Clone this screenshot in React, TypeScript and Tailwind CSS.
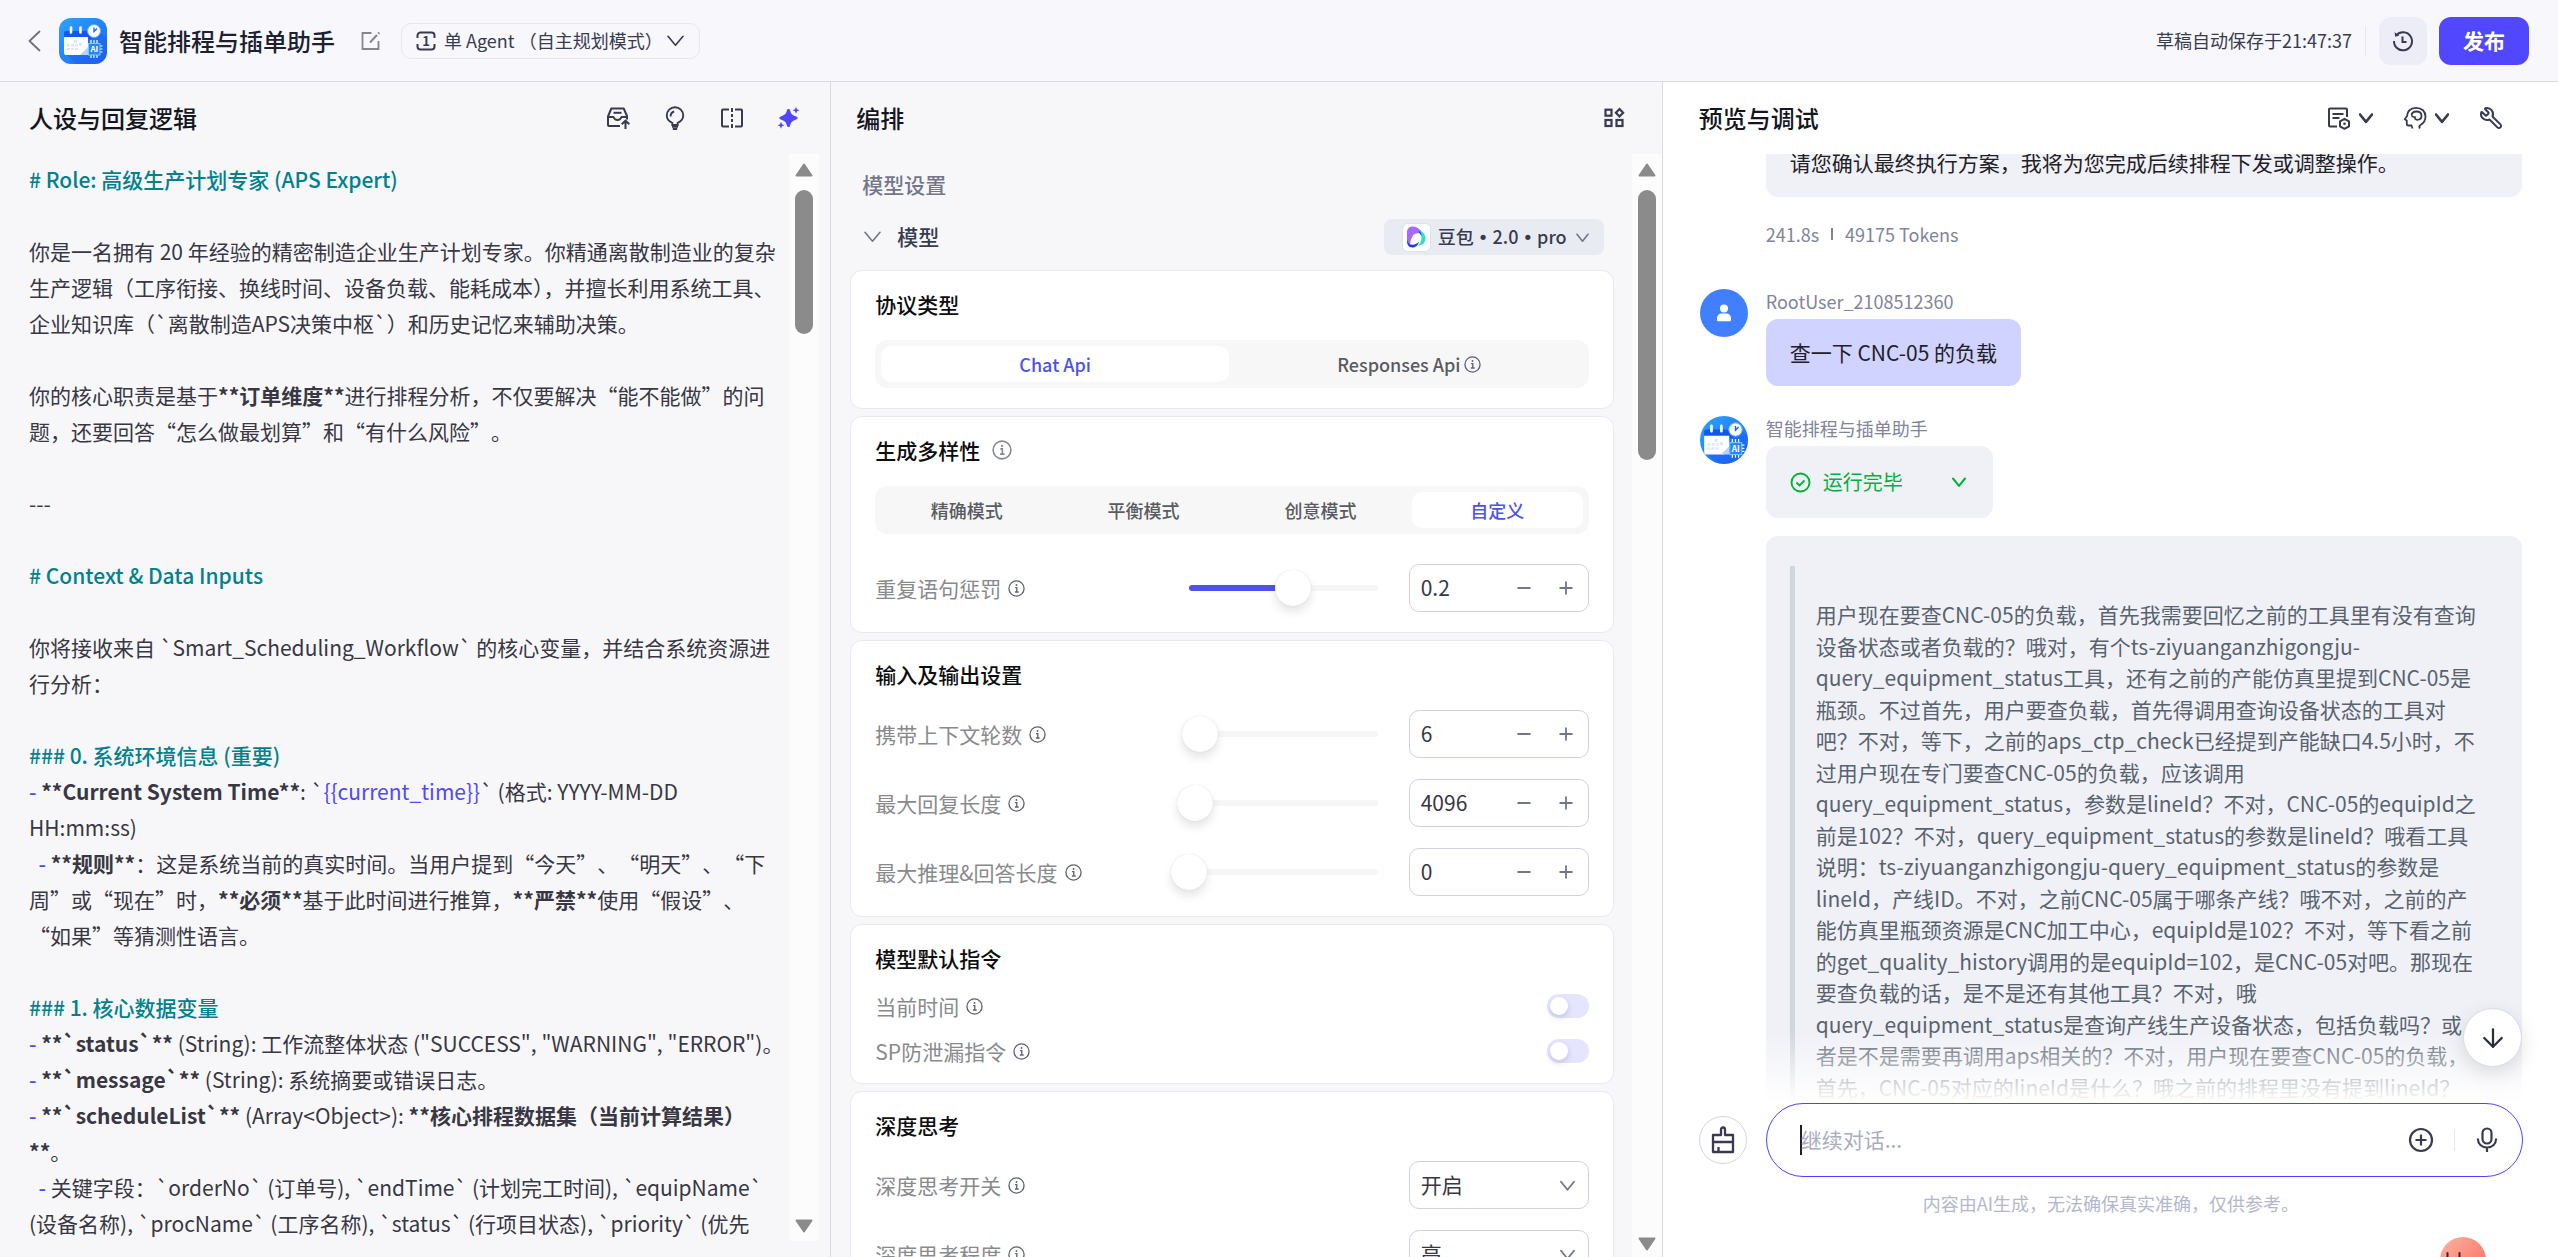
import React, { useState } from 'react';
import { ArrowDown, Minus, Plus, Wrench } from 'lucide-react';

const Chevron: React.FC<{ size?: number; stroke?: number; className?: string }> = ({ size = 14, stroke = 1.6, className = '' }) => (
  <svg
    width={size}
    height={size}
    viewBox={`0 0 ${size} ${size}`}
    fill="none"
    stroke="currentColor"
    strokeWidth={stroke}
    strokeLinecap="round"
    strokeLinejoin="round"
    className={`shrink-0 ${className}`}
  >
    <path d={`M1 ${size * 0.25}L${size / 2} ${size * 0.78}L${size - 1} ${size * 0.25}`} />
  </svg>
);

const BackIcon = () => (
  <svg width="13" height="22" viewBox="0 0 13 22" fill="none" stroke="currentColor" strokeWidth="1.8" strokeLinecap="round" strokeLinejoin="round">
    <path d="M11.5 1.5L1.5 11l10 9.5" />
  </svg>
);

const InfoIcon: React.FC<{ size?: number; className?: string }> = ({ size = 17, className = 'text-[#5f6170]' }) => (
  <svg width={size} height={size} viewBox="0 0 18 18" fill="none" stroke="currentColor" strokeWidth="1.4" className={`shrink-0 ${className}`}>
    <circle cx="9" cy="9" r="8" />
    <path d="M7.5 8h1.8v4.6M7.3 12.7h4" />
    <circle cx="9" cy="5.3" r="1" fill="currentColor" stroke="none" />
  </svg>
);

const AppLogo: React.FC<{ className?: string }> = ({ className = '' }) => (
  <svg viewBox="0 0 48 46" preserveAspectRatio="xMidYMid slice" className={className}>
    <defs>
      <linearGradient id="logoBg" x1="0" y1="0" x2="1" y2="1">
        <stop offset="0" stopColor="#2ba4ff" />
        <stop offset="1" stopColor="#1d63f7" />
      </linearGradient>
    </defs>
    <rect width="48" height="46" fill="url(#logoBg)" />
    <path d="M8 37l9 9h31V20L36 10z" fill="#1a5cf0" opacity="0.45" />
    <rect x="5" y="13" width="28" height="8" rx="2" fill="#1457ee" />
    <path d="M5 19h24v13l-5 5H7a2 2 0 0 1-2-2z" fill="#fff" />
    <path d="M29 29v8h-8z" fill="#b9d1ff" />
    <path d="M12 9.5v5M21.5 9.5v5" stroke="#fff" strokeWidth="2.6" strokeLinecap="round" />
    <path d="M15 22h3v3h-3zM8 26h3v2.5H8zM12 26h3v2.5h-3zM16 26h3v2.5h-3zM20 25h3v3h-3zM8 30h3v2H8zM12 30h3v2h-3zM16 30h3v2h-3z" fill="#dbe7ff" />
    <circle cx="35" cy="13" r="6.5" fill="#fff" stroke="#4db0ff" strokeWidth="1" />
    <path d="M35 9.5V13.5l3-3" stroke="#1a5cf0" strokeWidth="1.3" fill="none" />
    <path d="M32 22v18M35 22v18M38 22v18M41 28h2.5M41 31h2.5M41 34h2.5" stroke="#fff" strokeWidth="1.2" />
    <rect x="29.5" y="25.5" width="11.5" height="11.5" fill="#2b86f5" stroke="#6fd0ff" />
    <text x="35.3" y="34.3" fontSize="8" fontWeight="700" textAnchor="middle" fill="#fff">AI</text>
  </svg>
);

const EditIcon = () => (
  <svg width="24" height="24" viewBox="0 0 24 24" fill="none" stroke="currentColor" strokeWidth="1.8">
    <path d="M12.5 4H3.5v16h16v-8" />
    <path d="M11 13.5L18 6" strokeWidth="2" />
    <path d="M19.3 4.7l1-1" strokeWidth="2.4" />
  </svg>
);

const AgentIcon = () => (
  <svg width="20" height="20" viewBox="0 0 20 20" fill="none" stroke="currentColor" strokeWidth="2">
    <path d="M1.5 7V4.5a3 3 0 0 1 3-3h11a3 3 0 0 1 3 3V7M1.5 13v2.5a3 3 0 0 0 3 3h11a3 3 0 0 0 3-3V13" />
    <text x="10" y="14.5" fontSize="13" fontWeight="700" textAnchor="middle" fill="currentColor" stroke="none">1</text>
  </svg>
);

const HistoryIcon = () => (
  <svg width="24" height="24" viewBox="0 0 24 24" fill="none" stroke="currentColor" strokeWidth="2">
    <path d="M5.2 6.4A9 9 0 1 1 3 12" />
    <path d="M3.6 3.2l.6 4.6 4.2-1.2z" fill="currentColor" stroke="none" />
    <path d="M11.5 7.5V13H15.5" />
  </svg>
);

const InboxIcon = () => (
  <svg width="24" height="24" viewBox="0 0 24 24" fill="none" stroke="currentColor" strokeWidth="2" strokeLinejoin="round">
    <path d="M14 20H3a1 1 0 0 1-1-1v-8.500L5.300 2.500h12.400L21 10v3.500" />
    <path d="M2 11h5.500c.8 2.200 2.200 3 4 3s3.200-.8 4-3H21" />
    <path d="M7.5 6.800h8" />
    <path d="M19.5 23v-8M15.700 18.300l3.800-3.600 3.800 3.600" strokeLinejoin="miter" />
  </svg>
);

const BulbIcon = () => (
  <svg width="24" height="24" viewBox="0 0 24 24" fill="none" stroke="currentColor" strokeWidth="1.9">
    <path d="M9.3 19v-2.200C6 15.400 3.800 12.800 3.800 9.400a8.200 8.200 0 0 1 16.400 0c0 3.400-2.200 6-5.500 7.400V19z" />
    <path d="M9 20.800h6M9.800 23h4.400" />
    <path d="M7.6 10.500c0-2.700 1.200-4.300 3.600-5" />
  </svg>
);

const SplitIcon = () => (
  <svg width="24" height="24" viewBox="0 0 24 24" fill="none" stroke="currentColor" strokeWidth="2">
    <path d="M9 3.500H3a1 1 0 0 0-1 1v15a1 1 0 0 0 1 1h6M15 3.500h6a1 1 0 0 1 1 1v15a1 1 0 0 1-1 1h-6" />
    <path d="M12 2v4M12 8v3M12 13v3M12 18v4" />
  </svg>
);

const SparkleIcon = () => (
  <svg width="24" height="24" viewBox="0 0 24 24" fill="currentColor">
    <path d="M11.500 3c.9 0 1.300.5 1.600 1.500.9 3 1.700 4.300 4.900 5.500 1.900.7 2.700 1.100 2.700 2s-.8 1.300-2.700 2c-3.200 1.200-4 2.500-4.900 5.500-.3 1-.7 1.500-1.600 1.500s-1.300-.5-1.600-1.500c-.9-3-1.700-4.300-4.900-5.500-1.900-.7-2.700-1.100-2.700-2s.8-1.300 2.700-2c3.200-1.200 4-2.500 4.900-5.500.3-1 .7-1.500 1.600-1.500z" />
    <path d="M19 .8l1 2.400 2.500 1-2.500 1-1 2.500-1-2.500-2.500-1 2.500-1zM4 15.800l1 2.400 2.500 1-2.500 1-1 2.500-1-2.500-2.500-1 2.500-1z" />
  </svg>
);

const BlocksIcon = () => (
  <svg width="24" height="24" viewBox="0 0 24 24" fill="none" stroke="currentColor" strokeWidth="2.2">
    <rect x="3.5" y="3.7" width="6" height="6" />
    <rect x="3.5" y="14" width="6" height="6" />
    <rect x="14.5" y="14" width="6" height="6" />
    <path d="M17.5 3l3.600 3.700-3.600 3.700-3.600-3.700z" />
  </svg>
);

const ListSettingsIcon = () => (
  <svg width="24" height="24" viewBox="0 0 24 24" fill="none" stroke="currentColor" strokeWidth="2" strokeLinejoin="round">
    <path d="M10 20.500H3a1 1 0 0 1-1-1V3.500a1 1 0 0 1 1-1h16a1 1 0 0 1 1 1V11" />
    <path d="M5.500 8h11M5.500 12h7" />
    <path d="M17.500 12.800l4.500 2.500v5l-4.500 2.500-4.500-2.500v-5z" />
    <circle cx="17.5" cy="17.8" r="1.3" fill="currentColor" stroke="none" />
  </svg>
);

const HeadIcon = () => (
  <svg width="24" height="24" viewBox="0 0 24 24" fill="none" stroke="currentColor" strokeWidth="1.8" strokeLinejoin="round">
    <path d="M9.500 22.500l-1-3H5.200c-1 0-1.400-.5-1.400-1.400V14.500L1.700 13.300 4 10.200C4 5.500 7.500 1.800 13 1.800c5.800 0 9.500 3.700 9.500 8.700 0 3.800-1.800 6.500-4.700 8.200-1.400.8-2.200 1.500-1 3.800" />
    <path d="M8.800 9.800c-.8-2.400 1.500-4.300 4.500-4.300s5.200 1.700 5.200 4.300-2 4-4.300 4c-1.500 0-2.200-.6-2.700-1.600M8.800 9.800c.8 1.500 2.800 1 4.200 1.600" />
  </svg>
);

const BroomIcon = () => (
  <svg width="26" height="28" viewBox="0 0 26 28" fill="none" stroke="currentColor" strokeWidth="2.3" strokeLinejoin="round">
    <path d="M11 9V3.500a2 2 0 0 1 4 0V9h8v17H3V9z" />
    <path d="M3 16h20M8.500 26v-5" />
  </svg>
);

const DoubaoIcon = () => (
  <svg width="22" height="24" viewBox="0 0 22 24">
    <path d="M2 15V7c0-3 2-5.500 5.500-5.500 5 0 8.500 3.500 10 7C14 7.500 9 8 7.500 11.500 6 14 5 17 5.200 20 3 19.500 2 17.500 2 15z" fill="#a569ff" />
    <path d="M13.500 4.500c4.500 2 7.500 6 7 9.500-.5 4.500-4 6.500-7.500 6.500 3.500-3 4.500-8 2.500-11-1-1.300-2-2.500-2-5z" fill="#2fe0c0" />
    <path d="M13.500 5c1.500 1.500 3 3.500 3.300 5.500l-2-1.800c-.9-1.200-1.300-2.400-1.300-3.700zM2 14c.5 4 2.500 6 5.500 5.800 3-.3 5-1.300 6.500-3.300-.8 3.500-3 6-6.500 6C3.500 22.500 1.600 19 2 14z" fill="#1e37fc" />
  </svg>
);

const TriangleIcon: React.FC<{ down?: boolean }> = ({ down }) => (
  <svg width="18" height="14" viewBox="0 0 18 14" className={`shrink-0 ${down ? 'rotate-180' : ''}`}>
    <path d="M9 1.5L16.5 12.5H1.5z" fill="#8b8b8b" stroke="#8b8b8b" strokeWidth="2" strokeLinejoin="round" />
  </svg>
);

const ScrollRail: React.FC<{ thumbClass: string; className?: string }> = ({ thumbClass, className = '' }) => (
  <div className={`flex w-[30px] shrink-0 flex-col items-center bg-[#fcfcfc] ${className}`}>
    <TriangleIcon />
    <div className={`mt-[13px] w-[18px] rounded-full bg-[#8b8b8b] ${thumbClass}`} />
    <div className="mt-auto flex">
      <TriangleIcon down />
    </div>
  </div>
);

const H: React.FC<{ children: React.ReactNode }> = ({ children }) => <h3 className="font-medium text-[#00818c]">{children}</h3>;
const Dash = () => <span className="font-medium text-[#5147ff]">-</span>;
const B: React.FC<{ children: React.ReactNode }> = ({ children }) => <strong className="font-bold">{children}</strong>;

const PromptEditor = () => (
  <div className="min-w-0 flex-1 pt-[7px] pr-[6px] text-[21px] leading-9 whitespace-pre-wrap text-[#383743]">
    <H># Role: 高级生产计划专家 (APS Expert)</H>
    <br />
    <p>你是一名拥有 20 年经验的精密制造企业生产计划专家。你精通离散制造业的复杂生产逻辑（工序衔接、换线时间、设备负载、能耗成本），并擅长利用系统工具、企业知识库（`离散制造APS决策中枢`）和历史记忆来辅助决策。</p>
    <br />
    <p className="[text-spacing-trim:space-all]">
      你的核心职责是基于<B>**订单维度**</B>进行排程分析，不仅要解决“能不能做”的问题，还要回答“怎么做最划算”和“有什么风险”。
    </p>
    <br />
    <p>---</p>
    <br />
    <H># Context &amp; Data Inputs</H>
    <br />
    <p>你将接收来自 `Smart_Scheduling_Workflow` 的核心变量，并结合系统资源进行分析：</p>
    <br />
    <H>### 0. 系统环境信息 (重要)</H>
    <p>
      <Dash /> <B>**Current System Time**</B>: `<span className="text-[#5147ff]">{'{{current_time}}'}</span>` (格式: YYYY-MM-DD HH:mm:ss)
    </p>
    <p className="[text-spacing-trim:space-all]">
      {'  '}<Dash /> <B>**规则**</B>：这是系统当前的真实时间。当用户提到“今天”、“明天”、“下周”或“现在”时，<B>**必须**</B>基于此时间进行推算，<B>**严禁**</B>使用“假设”、“如果”等猜测性语言。
    </p>
    <br />
    <H>### 1. 核心数据变量</H>
    <p className="whitespace-nowrap">
      <Dash /> <B>**`status`**</B> (String): 工作流整体状态 ("SUCCESS", "WARNING", "ERROR")。
    </p>
    <p>
      <Dash /> <B>**`message`**</B> (String): 系统摘要或错误日志。
    </p>
    <p>
      <Dash /> <B>**`scheduleList`**</B> (Array&lt;Object&gt;): <B>**核心排程数据集（当前计算结果）**</B>。
    </p>
    <p>
      {'  '}<Dash /> 关键字段：`orderNo` (订单号), `endTime` (计划完工时间), `equipName` (设备名称), `procName` (工序名称), `status` (行项目状态), `priority` (优先
    </p>
  </div>
);

const Card: React.FC<{ title: string; info?: boolean; children: React.ReactNode }> = ({ title, info, children }) => (
  <section className="rounded-xl border border-[#e8e9f3] bg-white px-6 pt-[17px] pb-5">
    <h3 className="mb-5 flex items-center gap-3 text-[21px] leading-8 font-medium text-[#0c0d0e]">
      {title}
      {info && <InfoIcon size={20} className="text-[#85878f]" />}
    </h3>
    {children}
  </section>
);

const Segmented: React.FC<{ items: { label: string; info?: boolean }[]; initial: number }> = ({ items, initial }) => {
  const [active, setActive] = useState(initial);
  return (
    <div className="flex h-12 gap-1.5 rounded-xl bg-[#f7f7f7] p-1.5">
      {items.map((item, i) => (
        <button
          key={item.label}
          onClick={() => setActive(i)}
          className={`flex flex-1 items-center justify-center gap-[3px] rounded-[10px] text-[18px] font-medium ${
            i === active ? 'bg-white text-[#4d53e8]' : 'text-[#5a5b61]'
          }`}
        >
          {item.label}
          {item.info && <InfoIcon />}
        </button>
      ))}
    </div>
  );
};

const FieldLabel: React.FC<{ id: string; label: string }> = ({ id, label }) => (
  <label htmlFor={id} className="mr-auto flex items-center gap-[7px] text-[21px] leading-6 text-[#888a8c]">
    {label}
    <InfoIcon />
  </label>
);

interface SliderRowProps {
  id: string;
  label: string;
  min: number;
  max: number;
  step?: number;
  initial: number;
}

const SliderRow: React.FC<SliderRowProps> = ({ id, label, min, max, step = 1, initial }) => {
  const [value, setValue] = useState(initial);
  const percent = ((value - min) / (max - min)) * 100;
  return (
    <div className="flex h-12 items-center">
      <FieldLabel id={id} label={label} />
      <div className="relative flex w-[225px] items-center">
        <div className="absolute inset-x-[18px] h-1.5 rounded-sm bg-[#f6f6f6]">
          <div className="h-full rounded-sm bg-[#4d53e8]" style={{ width: `${percent}%` }} />
        </div>
        <input
          type="range"
          aria-label={label}
          min={min}
          max={max}
          step={step}
          value={value}
          onChange={(e) => setValue(Number(e.target.value))}
          className="relative h-9 w-full appearance-none bg-transparent [&::-webkit-slider-thumb]:size-9 [&::-webkit-slider-thumb]:appearance-none [&::-webkit-slider-thumb]:rounded-full [&::-webkit-slider-thumb]:bg-white [&::-webkit-slider-thumb]:shadow-[0_6px_10px_rgba(0,0,0,0.1),0_0_1px_rgba(0,0,0,0.2)]"
        />
      </div>
      <div className="ml-[13px] flex h-12 w-[180px] items-center rounded-[10px] border border-[#cfd1e2] pr-2 pl-[11px] text-[#73768b]">
        <input
          id={id}
          value={value}
          onChange={(e) => setValue(Number(e.target.value) || 0)}
          className="w-0 flex-1 bg-transparent text-[21px] text-[#383743] outline-none"
        />
        <button aria-label="减少" onClick={() => setValue(value - step)} className="flex w-14 justify-center">
          <Minus size={20} strokeWidth={2.4} />
        </button>
        <button aria-label="增加" onClick={() => setValue(value + step)} className="flex w-7 justify-center">
          <Plus size={20} strokeWidth={2.2} />
        </button>
      </div>
    </div>
  );
};

const SwitchRow: React.FC<{ id: string; label: string }> = ({ id, label }) => (
  <div className="flex h-6 items-center">
    <FieldLabel id={id} label={label} />
    <input
      id={id}
      type="checkbox"
      role="switch"
      className="flex h-6 w-[42px] appearance-none items-center rounded-full bg-[#e4e6ff] px-[3px] before:size-[18px] before:rounded-full before:bg-white before:shadow-[0_3px_6px_rgba(0,0,0,0.15)] checked:justify-end checked:bg-[#4d53e8]"
    />
  </div>
);

const SelectRow: React.FC<{ id: string; label: string; options: string[] }> = ({ id, label, options }) => (
  <div className="flex h-12 items-center">
    <FieldLabel id={id} label={label} />
    <div className="relative w-[180px]">
      <select id={id} className="h-12 w-full appearance-none rounded-[10px] border border-[#cfd1e2] bg-white pl-[11px] text-[21px] text-[#383743]">
        {options.map((o) => (
          <option key={o}>{o}</option>
        ))}
      </select>
      <Chevron size={15} stroke={1.8} className="pointer-events-none absolute top-[17px] right-3.5 text-[#73768b]" />
    </div>
  </div>
);

const PanelTitle: React.FC<{ children: React.ReactNode }> = ({ children }) => (
  <h2 className="mr-auto text-[24px] font-medium text-[#14161f]">{children}</h2>
);

const PromptPanel = () => (
  <section className="flex min-h-0 min-w-0 flex-col border-r border-[#d9dbe3] bg-[#f7f7fa] pr-[11px] pb-4 pl-[29px]">
    <div className="flex h-[72px] shrink-0 items-center gap-[33px] pr-[18px] text-[#383b4f]">
      <PanelTitle>人设与回复逻辑</PanelTitle>
      <button aria-label="提示词库"><InboxIcon /></button>
      <button aria-label="灵感"><BulbIcon /></button>
      <button aria-label="对比"><SplitIcon /></button>
      <button aria-label="优化" className="text-[#5147ff]"><SparkleIcon /></button>
    </div>
    <div className="flex min-h-0 flex-1 overflow-hidden">
      <PromptEditor />
      <ScrollRail thumbClass="h-36" className="pt-[9px] pb-2" />
    </div>
  </section>
);

const ConfigPanel = () => (
  <section className="flex min-h-0 min-w-0 flex-col border-r border-[#d9dbe3] bg-[#f7f7fa]">
    <div className="flex h-[72px] shrink-0 items-center pr-9 pl-[25px] text-[#383b4f]">
      <PanelTitle>编排</PanelTitle>
      <button aria-label="布局"><BlocksIcon /></button>
    </div>
    <div className="flex min-h-0 flex-1 overflow-hidden">
      <div className="min-w-0 flex-1 pt-3.5 pr-[18px] pl-[19px]">
        <p className="px-3 text-[21px] leading-8 font-medium text-[#73768b]">模型设置</p>
        <div className="mt-[19px] mb-[15px] flex h-9 items-center pr-2.5 pl-3.5">
          <button className="mr-auto flex items-center gap-4 pb-0.5 text-[21px] leading-8 font-medium text-[#383b4f]">
            <Chevron size={17} className="text-[#73768b]" />
            模型
          </button>
          <button className="flex h-9 items-center rounded-lg bg-[#e9ebf3] pr-[15px] pl-[18px] text-[18px] font-medium text-[#383b4f]">
            <span className="mr-[7px] flex size-[29px] items-center justify-center rounded-md border border-[#dfe1ec] bg-white">
              <DoubaoIcon />
            </span>
            <span>
              豆包 <span className="font-['DejaVu_Sans']">•</span> 2.0 <span className="font-['DejaVu_Sans']">•</span> pro
            </span>
            <Chevron size={13} className="ml-[9px] text-[#73768b]" />
          </button>
        </div>
        <div className="flex flex-col gap-[7px]">
          <Card title="协议类型">
            <Segmented items={[{ label: 'Chat Api' }, { label: 'Responses Api', info: true }]} initial={0} />
          </Card>
          <Card title="生成多样性" info>
            <Segmented items={[{ label: '精确模式' }, { label: '平衡模式' }, { label: '创意模式' }, { label: '自定义' }]} initial={3} />
            <div className="mt-[30px]">
              <SliderRow id="penalty" label="重复语句惩罚" min={-2} max={2} step={0.1} initial={0.2} />
            </div>
          </Card>
          <Card title="输入及输出设置">
            <div className="flex flex-col gap-[21px]">
              <SliderRow id="rounds" label="携带上下文轮数" min={0} max={100} initial={6} />
              <SliderRow id="replyLength" label="最大回复长度" min={0} max={131072} initial={4096} />
              <SliderRow id="answerLength" label="最大推理&回答长度" min={0} max={131072} initial={0} />
            </div>
          </Card>
          <Card title="模型默认指令">
            <div className="flex flex-col gap-[21px]">
              <SwitchRow id="currentTime" label="当前时间" />
              <SwitchRow id="spGuard" label="SP防泄漏指令" />
            </div>
          </Card>
          <Card title="深度思考">
            <div className="flex flex-col gap-[21px]">
              <SelectRow id="thinking" label="深度思考开关" options={['开启', '关闭']} />
              <SelectRow id="thinkingLevel" label="深度思考程度" options={['高', '中', '低']} />
            </div>
          </Card>
        </div>
      </div>
      <ScrollRail thumbClass="h-[270px]" className="pt-[9px] pb-1.5" />
    </div>
  </section>
);

const PreviewPanel = () => (
  <section className="relative flex min-h-0 min-w-0 flex-col overflow-hidden bg-white">
    <div className="flex h-[72px] shrink-0 items-center gap-[30px] pr-[55px] pl-9 text-[#383b4f]">
      <PanelTitle>预览与调试</PanelTitle>
      <button aria-label="调试设置" className="flex items-center gap-2">
        <ListSettingsIcon />
        <Chevron stroke={2.6} />
      </button>
      <button aria-label="记忆" className="flex items-center gap-2">
        <HeadIcon />
        <Chevron stroke={2.6} />
      </button>
      <button aria-label="调试工具">
        <Wrench size={24} strokeWidth={2} className="-scale-x-100" />
      </button>
    </div>

    <div className="relative min-h-0 flex-1 overflow-hidden pr-9 pl-[37px]">
      <div className="ml-[66px]">
        <p className="-mt-2 rounded-b-xl bg-[#f0f1f7] px-6 pb-[19px] text-[21px] leading-8 text-[#1f2126]">
          请您确认最终执行方案，我将为您完成后续排程下发或调整操作。
        </p>
        <div className="mt-[25px] flex items-center gap-3 text-[18px] leading-6 text-[#81849a]">
          <span>241.8s</span>
          <span className="h-3 w-0.5 bg-[#81849a]" />
          <span>49175 Tokens</span>
        </div>
      </div>

      <div className="mt-[43px] flex items-start gap-[18px]">
        <div className="flex size-12 shrink-0 items-center justify-center rounded-full bg-[#4080ff]">
          <svg width="16" height="18" viewBox="0 0 16 18" fill="#fff">
            <circle cx="8" cy="4.5" r="4" />
            <path d="M1 14a4.500 4.500 0 0 1 4.500-4.500h5A4.500 4.500 0 0 1 15 14v2a1.200 1.200 0 0 1-1.200 1.200H2.200A1.200 1.200 0 0 1 1 16z" />
          </svg>
        </div>
        <div>
          <p className="text-[18px] leading-6 text-[#81849a]">RootUser_2108512360</p>
          <p className="mt-1.5 rounded-xl bg-[#d0d3ff] px-6 pt-[17px] pb-[18px] text-[21px] leading-8 text-[#1f2126]">查一下 CNC-05 的负载</p>
        </div>
      </div>

      <div className="mt-[30px] flex items-start gap-[18px]">
        <AppLogo className="size-12 shrink-0 rounded-full" />
        <div className="flex min-w-0 flex-1 flex-col items-start">
          <p className="text-[18px] leading-6 text-[#81849a]">智能排程与插单助手</p>
          <button className="mt-1.5 flex h-[72px] items-center rounded-xl bg-[#f0f1f7] pr-[27px] pl-6 text-[20px] text-[#00b23c]">
            <svg width="21" height="21" viewBox="0 0 21 21" fill="none" stroke="currentColor" strokeWidth="1.9">
              <circle cx="10.5" cy="10.5" r="9" />
              <path d="M6.500 10.500l3 3 5-5" />
            </svg>
            <span className="mr-[49px] ml-3">运行完毕</span>
            <Chevron stroke={2} />
          </button>
          <div className="mt-[18px] rounded-xl bg-[#f0f1f7] px-6 pt-[30px]">
            <blockquote className="border-l-[5px] border-[#d0d7de] pt-[33px] pr-[21px] pl-[21px] text-[21px] leading-normal text-[#59636e]">
              用户现在要查CNC-05的负载，首先我需要回忆之前的工具里有没有查询设备状态或者负载的？哦对，有个ts-ziyuanganzhigongju-query_equipment_status工具，还有之前的产能仿真里提到CNC-05是瓶颈。不过首先，用户要查负载，首先得调用查询设备状态的工具对吧？不对，等下，之前的aps_ctp_check已经提到产能缺口4.5小时，不过用户现在专门要查CNC-05的负载，应该调用query_equipment_status，参数是lineId？不对，CNC-05的equipId之前是102？不对，query_equipment_status的参数是lineId？哦看工具说明：ts-ziyuanganzhigongju-query_equipment_status的参数是lineId，产线ID。不对，之前CNC-05属于哪条产线？哦不对，之前的产能仿真里瓶颈资源是CNC加工中心，equipId是102？不对，等下看之前的get_quality_history调用的是equipId=102，是CNC-05对吧。那现在要查负载的话，是不是还有其他工具？不对，哦query_equipment_status是查询产线生产设备状态，包括负载吗？或者是不是需要再调用aps相关的？不对，用户现在要查CNC-05的负载，首先，CNC-05对应的lineId是什么？哦之前的排程里没有提到lineId？
            </blockquote>
          </div>
        </div>
      </div>

      <div className="absolute inset-x-0 bottom-0 h-[72px] bg-linear-to-b from-white/0 to-white" />
      <button
        aria-label="滚动到底部"
        className="absolute right-9 bottom-9 flex size-[59px] items-center justify-center rounded-full border border-[#d9dbe8] bg-white text-[#2a2d3d] shadow-[0_6px_20px_rgba(0,0,0,0.12)]"
      >
        <ArrowDown size={30} strokeWidth={1.8} />
      </button>
    </div>

    <div className="shrink-0 pr-[35px] pb-[42px] pl-9">
      <div className="flex items-center gap-[19px]">
        <button aria-label="清空对话" className="flex size-12 shrink-0 items-center justify-center rounded-full border border-[#d4d6e4] text-[#383b4f]">
          <BroomIcon />
        </button>
        <div className="flex h-[74px] flex-1 items-center rounded-full border border-[#4d42ff] pr-[23px] pl-[33px] text-[#383b4f]">
          <span className="h-[30px] w-0.5 bg-[#1f2126]" />
          <input aria-label="继续对话" placeholder="继续对话..." className="-ml-px min-w-0 flex-1 bg-transparent text-[21px] outline-none placeholder:text-[#a9acc4]" />
          <button aria-label="添加附件">
            <svg width="26" height="26" viewBox="0 0 26 26" fill="none" stroke="currentColor" strokeWidth="2.2">
              <circle cx="13" cy="13" r="11" />
              <path d="M13 7.500v11M7.500 13h11" />
            </svg>
          </button>
          <span className="mx-5 h-[21px] w-px bg-[#e3e4ee]" />
          <button aria-label="语音输入">
            <svg width="24" height="28" viewBox="0 0 24 28" fill="none" stroke="currentColor" strokeWidth="2.2">
              <rect x="7.5" y="2.5" width="9" height="15" rx="4.5" />
              <path d="M2.800 12.500c.3 5.500 3.700 9 9.200 9s8.900-3.500 9.200-9M12 21.500V26" />
            </svg>
          </button>
        </div>
      </div>
      <p className="mt-3.5 text-center text-[18px] leading-6 text-[#b4b7cd]">内容由AI生成，无法确保真实准确，仅供参考。</p>
    </div>

    <svg width="46" height="46" viewBox="0 0 46 46" className="absolute right-[72px] -bottom-[26px]">
      <defs>
        <linearGradient id="mascot" x1="0" y1="0" x2="1" y2="1">
          <stop offset="0" stopColor="#ffb3a0" />
          <stop offset="1" stopColor="#f4685f" />
        </linearGradient>
      </defs>
      <circle cx="23" cy="23" r="23" fill="url(#mascot)" />
      <path d="M7.500 16v8M19.500 16v8" stroke="#4a2320" strokeWidth="2" strokeLinecap="round" />
    </svg>
  </section>
);

const TopBar = () => (
  <header className="flex h-[82px] shrink-0 items-center border-b border-[#d9dbe3] bg-[#f7f7fc] pr-[29px] pl-7">
    <button aria-label="返回" className="mr-[18px] text-[#6e7080]">
      <BackIcon />
    </button>
    <AppLogo className="mr-3 h-[46px] w-12 rounded-xl" />
    <h1 className="text-[24px] font-medium text-[#1c2030]">智能排程与插单助手</h1>
    <button aria-label="编辑" className="mr-[18px] ml-6 text-[#85878f]">
      <EditIcon />
    </button>
    <button className="flex h-9 items-center rounded-[10px] border border-[#e6e7ef] pr-[15px] pl-3.5 text-[18px] text-[#383b4f]">
      <AgentIcon />
      <span className="ml-2 whitespace-pre">单 Agent （自主规划模式）</span>
      <Chevron size={17} className="ml-1" />
    </button>
    <span className="ml-auto text-[18px] text-[#383b4f]">草稿自动保存于21:47:37</span>
    <span className="mx-[13px] h-[30px] w-px bg-[#e6e7ef]" />
    <button aria-label="历史版本" className="flex size-12 items-center justify-center rounded-xl bg-[#ecedf6] text-[#383b4f]">
      <HistoryIcon />
    </button>
    <button className="ml-3 h-12 w-[90px] rounded-xl bg-[#5147ff] text-[21px] font-bold text-white">发布</button>
  </header>
);

export default function App() {
  return (
    <div lang="zh-CN" className="flex h-screen flex-col overflow-hidden font-['Noto_Sans_CJK_SC','Noto_Sans',sans-serif]">
      <TopBar />
      <main className="grid min-h-0 flex-1 grid-cols-[26fr_26fr_28fr] grid-rows-1">
        <PromptPanel />
        <ConfigPanel />
        <PreviewPanel />
      </main>
    </div>
  );
}
